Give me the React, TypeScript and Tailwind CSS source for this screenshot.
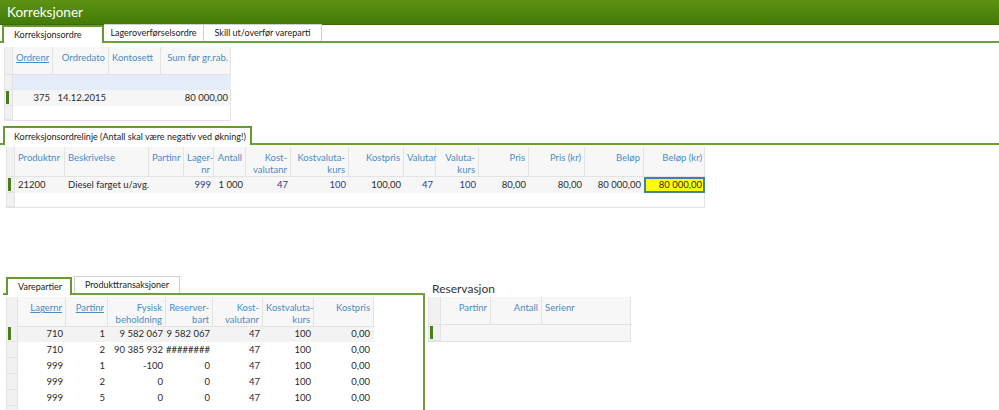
import React from "react";

function HeadCell({ children, right, u, last }: { children?: React.ReactNode; right?: boolean; u?: boolean; last?: boolean }) {
  return (
    <div
      className={
        "px-[3px] pt-[5px] leading-[12px] text-[#4a8cc4] border-b border-[#e3e3e3] whitespace-nowrap " +
        (last ? "" : "border-r ") +
        (right ? "text-right" : "text-left")
      }
    >
      {u ? <span className="underline">{children}</span> : children}
    </div>
  );
}

function RowHdr({ mark, h }: { mark?: boolean; h?: string }) {
  return (
    <div className={"bg-[#f1f1f1] border-r border-b border-[#e3e3e3] flex items-center pl-[1px] " + (h || "")}>
      {mark ? <div className="w-[3px] h-[13px] bg-[#4c7d1a]" /> : null}
    </div>
  );
}

function Cell({ children, right, navy, cls }: { children?: React.ReactNode; right?: boolean; navy?: boolean; cls?: string }) {
  return (
    <div
      className={
        "px-[3px] flex items-center whitespace-nowrap overflow-hidden " +
        (right ? "justify-end " : "justify-start ") +
        (navy ? "text-[#34388a] " : "text-[#2a2a2a] ") +
        (cls || "")
      }
    >
      {children}
    </div>
  );
}

function ActiveTab({ children, cls }: { children: React.ReactNode; cls?: string }) {
  return (
    <div
      className={
        "relative z-10 -mb-[2px] bg-white border-t-[2px] border-l-[2px] border-r-[2px] border-[#66992e] flex items-center whitespace-nowrap text-[9px] text-[#222] " +
        (cls || "")
      }
    >
      {children}
    </div>
  );
}

function Tab({ children, cls }: { children: React.ReactNode; cls?: string }) {
  return (
    <div
      className={
        "border-t border-r border-[#cfcfcf] bg-white flex items-center justify-center whitespace-nowrap text-[9px] text-[#222] " +
        (cls || "")
      }
    >
      {children}
    </div>
  );
}

export default function App() {
  const topCols = "grid grid-cols-[8px_40px_56px_52px_70px]";
  const midCols =
    "grid grid-cols-[8px_50px_84px_35px_30px_32px_45px_58px_55px_32px_43px_50px_56px_59px_61px]";
  const botCols = "grid grid-cols-[11px_48px_42px_58px_47px_50px_51px_60px]";
  const resCols = "grid grid-cols-[12px_50px_51px_90px]";

  const botRows: string[][] = [
    ["710", "1", "9 582 067", "9 582 067", "47", "100", "0,00"],
    ["710", "2", "90 385 932", "########", "47", "100", "0,00"],
    ["999", "1", "-100", "0", "47", "100", "0,00"],
    ["999", "2", "0", "0", "47", "100", "0,00"],
    ["999", "5", "0", "0", "47", "100", "0,00"],
    ["999", "8", "15 097,58", "0,01", "47", "100", "7,05"],
  ];

  return (
    <div className="w-[999px] h-[410px] overflow-hidden bg-white font-['Lato','Noto_Sans',sans-serif] text-[9.5px] text-[#2a2a2a]">
      {/* Title bar */}
      <div className="h-[25px] bg-gradient-to-b from-[#5c9214] to-[#437c06] border-b border-[#3c6a0a] flex items-center pl-[7px] text-white text-[13.5px]">
        Korreksjoner
      </div>

      {/* Top tabs */}
      <div className="flex items-end h-[18px] pl-[2px] border-b-[2px] border-[#6e9f3a]">
        <ActiveTab cls="w-[102px] h-[18px] pl-[10px]">Korreksjonsordre</ActiveTab>
        <Tab cls="w-[100px] h-[17px]">Lageroverførselsordre</Tab>
        <Tab cls="w-[118px] h-[17px]">Skill ut/overfør vareparti</Tab>
      </div>

      {/* Top table */}
      <div className="ml-[4px] mt-[4px] w-[227px] border border-[#e3e3e3] border-t-0">
        <div className={topCols + " h-[28px] bg-[#f7f7f7]"}>
          <RowHdr />
          <HeadCell right u>Ordrenr</HeadCell>
          <HeadCell right>Ordredato</HeadCell>
          <HeadCell>Kontosett</HeadCell>
          <HeadCell right last>Sum før gr.rab.</HeadCell>
        </div>
        <div className={topCols + " h-[15px]"}>
          <RowHdr />
          <div className="col-span-4 bg-[#e3ecf8]" />
        </div>
        <div className={topCols + " h-[16px] bg-[#f6f6f6]"}>
          <RowHdr mark />
          <Cell right>375</Cell>
          <Cell right>14.12.2015</Cell>
          <Cell />
          <Cell right>80 000,00</Cell>
        </div>
        <div className={topCols + " h-[14px]"}>
          <RowHdr />
          <div className="col-span-4" />
        </div>
      </div>

      {/* Section 2 tab */}
      <div className="mt-[5px] flex items-end h-[19px] pl-[3px] border-b-[2px] border-[#6e9f3a]">
        <ActiveTab cls="w-[249px] h-[19px] pl-[9px]">
          Korreksjonsordrelinje (Antall skal være negativ ved økning!)
        </ActiveTab>
      </div>

      {/* Middle table */}
      <div className="ml-[6px] mt-[2px] w-[699px] border border-[#e3e3e3] border-t-0">
        <div className={midCols + " h-[30px] bg-[#f7f7f7]"}>
          <RowHdr />
          <HeadCell>Produktnr</HeadCell>
          <HeadCell>Beskrivelse</HeadCell>
          <HeadCell right>Partinr</HeadCell>
          <HeadCell right>Lager-<br />nr</HeadCell>
          <HeadCell right>Antall</HeadCell>
          <HeadCell right>Kost-<br />valutanr</HeadCell>
          <HeadCell right>Kostvaluta-<br />kurs</HeadCell>
          <HeadCell right>Kostpris</HeadCell>
          <HeadCell right>Valutar</HeadCell>
          <HeadCell right>Valuta-<br />kurs</HeadCell>
          <HeadCell right>Pris</HeadCell>
          <HeadCell right>Pris (kr)</HeadCell>
          <HeadCell right>Beløp</HeadCell>
          <HeadCell right last>Beløp (kr)</HeadCell>
        </div>
        <div className={midCols + " h-[16px] bg-[#f6f6f6]"}>
          <RowHdr mark />
          <Cell>21200</Cell>
          <Cell>Diesel farget u/avg.</Cell>
          <Cell right />
          <Cell right navy>999</Cell>
          <Cell right>1 000</Cell>
          <Cell right navy>47</Cell>
          <Cell right navy>100</Cell>
          <Cell right>100,00</Cell>
          <Cell right navy>47</Cell>
          <Cell right navy>100</Cell>
          <Cell right>80,00</Cell>
          <Cell right>80,00</Cell>
          <Cell right>80 000,00</Cell>
          <Cell right cls="bg-[#ffff00] border-[2px] border-[#3f82a8] pr-[1px]">80 000,00</Cell>
        </div>
        <div className={midCols + " h-[14px]"}>
          <RowHdr />
          <div className="col-span-14" />
        </div>
      </div>

      {/* Bottom section */}
      <div className="mt-[68px] flex">
        <div className="w-[425px] flex flex-col pl-[3px]">
          <div className="flex items-end h-[17px] pl-[3px]">
            <ActiveTab cls="w-[66px] h-[18px] pl-[10px]">Varepartier</ActiveTab>
            <div className="w-[2px]" />
            <Tab cls="w-[106px] h-[17px] border-l">Produkttransaksjoner</Tab>
          </div>
          <div className="h-[120px] border-t-[2px] border-r-[2px] border-[#6e9f3a] pt-[2px] pl-[3px]">
            <div className="w-[368px] border-l border-[#e3e3e3]">
              <div className={botCols + " h-[29px] bg-[#f7f7f7]"}>
                <RowHdr />
                <HeadCell right u>Lagernr</HeadCell>
                <HeadCell right u>Partinr</HeadCell>
                <HeadCell right>Fysisk<br />beholdning</HeadCell>
                <HeadCell right>Reserver-<br />bart</HeadCell>
                <HeadCell right>Kost-<br />valutanr</HeadCell>
                <HeadCell right>Kostvaluta-<br />kurs</HeadCell>
                <HeadCell right>Kostpris</HeadCell>
              </div>
              {botRows.map((r, i) => (
                <div key={i} className={botCols + " h-[16px] " + (i === 0 ? "bg-[#f3f3f3]" : "bg-white")}>
                  <RowHdr mark={i === 0} />
                  {r.map((v, j) => (
                    <Cell key={j} right cls={j === 6 ? "pr-[4px]" : ""}>
                      {v}
                    </Cell>
                  ))}
                </div>
              ))}
            </div>
          </div>
        </div>

        <div className="ml-[3px] flex flex-col">
          <div className="h-[21px] pt-[6px] pl-[4px] text-[12px] leading-[14px] text-[#333]">Reservasjon</div>
          <div className="w-[203px] border border-[#e3e3e3] border-t-0">
            <div className={resCols + " h-[28px] bg-[#f7f7f7]"}>
              <RowHdr />
              <HeadCell right>Partinr</HeadCell>
              <HeadCell right>Antall</HeadCell>
              <HeadCell last>Serienr</HeadCell>
            </div>
            <div className={resCols + " h-[16px] bg-[#f6f6f6]"}>
              <RowHdr mark />
              <div className="col-span-3" />
            </div>
          </div>
        </div>
      </div>
    </div>
  );
}
